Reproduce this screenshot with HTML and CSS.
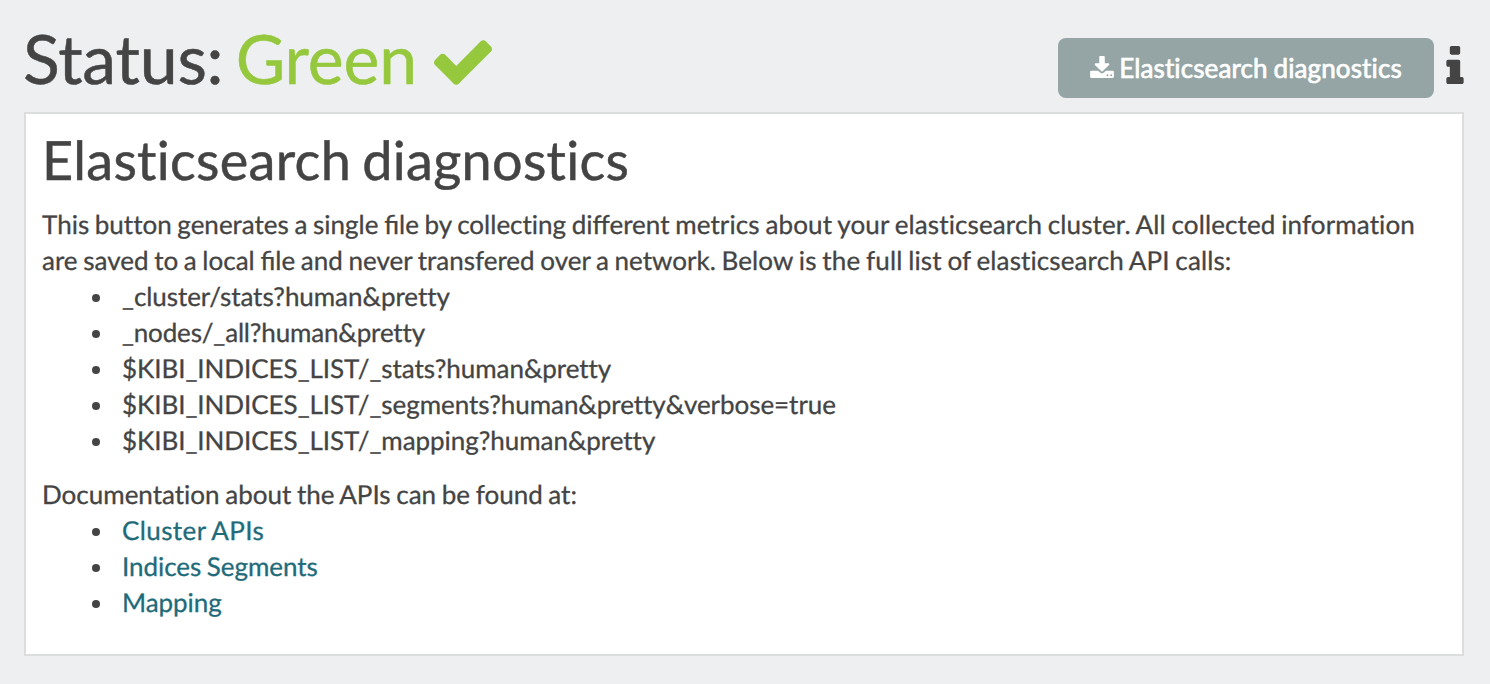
FILE: index.html
```html
<!DOCTYPE html>
<html lang="en">
<head>
<meta charset="utf-8">
<title>Status</title>
<link rel="stylesheet" href="styles.css">
</head>
<body>
<main class="page">
  <header class="header">
    <h1 class="status">Status: <span class="green">Green</span>
      <svg class="check" viewBox="121 334 1550 1188"><path d="M1671 566q0 40-28 68l-724 724-136 136q-28 28-68 28t-68-28l-136-136-362-362q-28-28-28-68t28-68l136-136q28-28 68-28t68 28l294 295 656-657q28-28 68-28t68 28l136 136q28 28 28 68z"/></svg>
    </h1>
    <div class="actions">
      <button class="button"><svg class="download" viewBox="64 0 1664 1536"><path d="M1344 1344q0-26-19-45t-45-19-45 19-19 45 19 45 45 19 45-19 19-45zm256 0q0-26-19-45t-45-19-45 19-19 45 19 45 45 19 45-19 19-45zm128-224v320q0 40-28 68t-68 28h-1472q-40 0-68-28t-28-68v-320q0-40 28-68t68-28h465l135 136q58 56 136 56t136-56l136-136h464q40 0 68 28t28 68zm-325-569q17 41-14 70l-448 448q-18 19-45 19t-45-19l-448-448q-31-29-14-70 17-39 59-39h256v-448q0-26 19-45t45-19h256q26 0 45 19t19 45v448h256q42 0 59 39z"/></svg><span>Elasticsearch diagnostics</span></button>
      <svg class="info" viewBox="0 0 640 1408"><path d="M640 1216v128q0 26-19 45t-45 19h-512q-26 0-45-19t-19-45v-128q0-26 19-45t45-19h64v-384h-64q-26 0-45-19t-19-45v-128q0-26 19-45t45-19h384q26 0 45 19t19 45v576h64q26 0 45 19t19 45zM512 64v192q0 26-19 45t-45 19h-256q-26 0-45-19t-19-45v-192q0-26 19-45t45-19h256q26 0 45 19t19 45z"/></svg>
    </div>
  </header>
  <section class="panel">
    <h2 class="title">Elasticsearch diagnostics</h2>
    <p class="text">This button generates a single <span class="lig">file</span> by collecting <span class="lig">different</span> <span class="loose">metrics about your elasticsearch cluster. All collected information</span><br>are saved to a local <span class="lig">file</span> and never transfered over a network. <span class="loose">Below is the full list of elasticsearch API calls:</span></p>
    <ul class="list calls">
      <li>_cluster/stats?human&amp;pretty</li>
      <li class="tight">_nodes/_all?human&amp;pretty</li>
      <li>$KIBI_INDICES_LIST/_stats?human&amp;pretty</li>
      <li>$KIBI_INDICES_LIST/_segments?human&amp;pretty&amp;verbose=true</li>
      <li>$KIBI_INDICES_LIST/_mapping?human&amp;pretty</li>
    </ul>
    <p class="text">Documentation about the APIs can be found at:</p>
    <ul class="list">
      <li><a class="link wide" href="#">Cluster APIs</a></li>
      <li><a class="link" href="#">Indices Segments</a></li>
      <li><a class="link" href="#">Mapping</a></li>
    </ul>
  </section>
</main>
</body>
</html>
```
FILE: styles.css
```css
* { box-sizing: border-box; }
body { margin: 0; background: #edeff1; color: #444; font: 26px/36px Lato, sans-serif; font-variant-ligatures: none; text-rendering: geometricPrecision; }
.page { height: 684px; padding: 0 26px 28px 24px; display: flex; flex-direction: column; }
.header { height: 112px; flex: none; display: flex; justify-content: space-between; }
.status { margin: 18px 0 0 -1px; font-size: 68px; line-height: 82px; font-weight: 400; white-space: nowrap; word-spacing: -5px; letter-spacing: -0.2px; -webkit-text-stroke: 0.5px; }
.green { color: #95c83d; }
.check { width: 58px; height: 45px; fill: #95c83d; stroke: none; margin: 0 0 -1px 5px; }
.actions { display: flex; gap: 12px; padding-top: 38px; }
.button { width: 376px; height: 60px; border: 0; border-radius: 8px; background: #95a5a5; color: #fff; font: 26px/36px Lato, sans-serif; font-variant-ligatures: none; display: flex; align-items: center; justify-content: center; gap: 5px; padding: 0; white-space: nowrap; word-spacing: -1px; letter-spacing: 0.12px; -webkit-text-stroke: 0.7px; }
.download { width: 24px; height: 22px; fill: #fff; stroke: none; margin-top: -3px; }
.info { width: 18px; height: 38px; margin-top: 8px; fill: #444; }
.panel { flex: 1; border: 2px solid #dcdddd; background: #fff; padding: 16px 16px; }
.title { margin: 0 0 16px; font-size: 54px; line-height: 60px; font-weight: 400; word-spacing: -3px; letter-spacing: 0.3px; -webkit-text-stroke: 0.5px; }
.text { margin: 0; white-space: nowrap; word-spacing: -1px; -webkit-text-stroke: 0.3px; }
.lig { font-variant-ligatures: normal; }
.loose { letter-spacing: 0.12px; }
.list { margin: 0; padding-left: 50px; list-style: none; word-spacing: -1px; letter-spacing: -0.05px; -webkit-text-stroke: 0.3px; }
.list li { display: flex; align-items: center; }
.list li::before { content: ""; width: 8px; height: 8px; border-radius: 50%; background: #444; margin: 3px 22px 0 0; }
.list .tight { letter-spacing: -0.16px; }
.wide { letter-spacing: 0.4px; }
.calls { margin-bottom: 18px; }
.link { color: #1f6b7a; text-decoration: none; }
```
